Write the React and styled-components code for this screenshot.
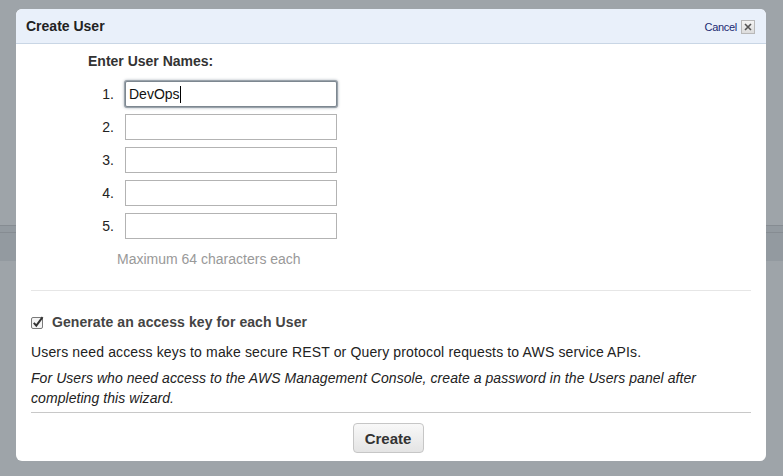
import styled, { createGlobalStyle } from "styled-components";

const GlobalStyle = createGlobalStyle`
    html, body {
        margin: 0;
        padding: 0;
        background: #9ea4a9;
        font-family: "Liberation Sans", Arial, sans-serif;
    }
`;

const Page = styled.div`
    position: relative;
    width: 783px;
    height: 476px;
    overflow: hidden;
    background: #9ea4a9;
    padding-top: 9px;
    box-sizing: border-box;
`;

// bands of the console behind the modal
const Backdrop = styled.div`
    position: absolute;
    left: 0;
    right: 0;
    top: 225px;
    height: 35px;
    border-top: 1px solid #868c92;
    background: #939aa0;
    &::after {
        content: "";
        position: absolute;
        left: 0;
        right: 0;
        top: 6px;
        border-top: 1px solid #868c92;
    }
`;

const Dialog = styled.div`
    position: relative;
    margin-left: 16px;
    width: 750px;
    height: 452px;
    background: #fff;
    border-radius: 6px;
    overflow: hidden;
    display: flex;
    flex-direction: column;
`;

const Header = styled.div`
    height: 34px;
    background: #e9f0fa;
    border-bottom: 1px solid #c9d6e5;
    display: flex;
    align-items: center;
    justify-content: space-between;
    padding: 0 11px 0 10px;
`;

const Title = styled.div`
    font-size: 14px;
    font-weight: bold;
    color: #222;
`;

const HeaderRight = styled.div`
    display: flex;
    align-items: center;
    gap: 4px;
    padding-top: 2px;
`;

const CancelLink = styled.span`
    font-size: 11px;
    letter-spacing: -0.3px;
    color: #1a2a72;
`;

const CloseBox = styled.div`
    width: 12px;
    height: 12px;
    border: 1px solid #b8b8b8;
    background: linear-gradient(#f4f4f4, #dcdcdc);
    display: flex;
    align-items: center;
    justify-content: center;
`;

const Body = styled.div`
    padding: 0 15px;
    display: flex;
    flex-direction: column;
`;

const NamesBlock = styled.div`
    padding: 9px 0 23px 57px;
    display: flex;
    flex-direction: column;
`;

const Label = styled.div`
    font-size: 14px;
    font-weight: bold;
    color: #333;
    margin-bottom: 12px;
`;

const NameRow = styled.div`
    display: flex;
    align-items: center;
    height: 26px;
    margin-bottom: 7px;
`;

const Num = styled.span`
    width: 26px;
    text-align: right;
    font-size: 14px;
    color: #222;
    margin-right: 11px;
`;

const NameInput = styled.div`
    width: 207px;
    height: 24px;
    border: 1px solid ${p => (p.focused ? "#7d8790" : "#b3b3b3")};
    box-shadow: ${p => (p.focused ? "0 0 0 1px #9aa3ab, 0 0 3px 1px #aeb6bd" : "none")};
    border-radius: ${p => (p.focused ? "2px" : "0")};
    background: #fff;
    font-size: 14px;
    color: #111;
    padding-left: 3px;
    display: flex;
    align-items: center;
    box-sizing: content-box;
`;

const Caret = styled.span`
    display: inline-block;
    width: 1px;
    height: 17px;
    background: #000;
`;

const Hint = styled.div`
    font-size: 14px;
    color: #999;
    margin: 5px 0 0 29px;
`;

const Rule = styled.div`
    height: 1px;
    background: ${p => p.color};
`;

const CheckRow = styled.div`
    display: flex;
    align-items: center;
    gap: 8px;
    margin-top: 23px;
`;

const CheckText = styled.span`
    font-size: 14px;
    font-weight: bold;
    letter-spacing: 0.08px;
    color: #444;
`;

const Para = styled.p`
    margin: ${p => p.m};
    font-size: 14px;
    line-height: 20px;
    letter-spacing: ${p => (p.italic ? "0.06px" : "0.15px")};
    color: #222;
    font-style: ${p => (p.italic ? "italic" : "normal")};
`;

const Footer = styled.div`
    display: flex;
    justify-content: center;
    padding: 10px 6px 0 0;
`;

const CreateButton = styled.button`
    width: 71px;
    height: 30px;
    border: 1px solid #c6c6c6;
    border-radius: 4px;
    background: linear-gradient(#f8f8f8, #e4e4e4);
    font-family: inherit;
    font-size: 15px;
    font-weight: bold;
    color: #333;
    padding: 0;
`;

function CheckIcon() {
    return (
        <svg width="13" height="13" viewBox="0 0 13 13">
            <rect x="0.5" y="1.5" width="11" height="11" rx="1.5" fill="#f4f4f4" stroke="#7a7a7a" />
            <path d="M2.8 6.8 L5.3 9.6 L11.6 1.2" fill="none" stroke="#333" strokeWidth="2" />
        </svg>
    );
}

function XIcon() {
    return (
        <svg width="8" height="8" viewBox="0 0 8 8">
            <path d="M1 1 L7 7 M7 1 L1 7" stroke="#555" strokeWidth="1.6" />
        </svg>
    );
}

export default function App() {
    const names = ["DevOps", "", "", "", ""];
    return (
        <Page>
            <GlobalStyle />
            <Backdrop />
            <Dialog>
                <Header>
                    <Title>Create User</Title>
                    <HeaderRight>
                        <CancelLink>Cancel</CancelLink>
                        <CloseBox><XIcon /></CloseBox>
                    </HeaderRight>
                </Header>
                <Body>
                    <NamesBlock>
                        <Label>Enter User Names:</Label>
                        {names.map((name, i) => (
                            <NameRow key={i}>
                                <Num>{i + 1}.</Num>
                                <NameInput focused={i === 0}>
                                    {name}
                                    {i === 0 && <Caret />}
                                </NameInput>
                            </NameRow>
                        ))}
                        <Hint>Maximum 64 characters each</Hint>
                    </NamesBlock>
                    <Rule color="#e6e6e6" />
                    <CheckRow>
                        <CheckIcon />
                        <CheckText>Generate an access key for each User</CheckText>
                    </CheckRow>
                    <Para m="12px 0 0 0">
                        Users need access keys to make secure REST or Query protocol requests to AWS service APIs.
                    </Para>
                    <Para m="6px 0 4px 0" italic>
                        For Users who need access to the AWS Management Console, create a password in the Users panel after completing this wizard.
                    </Para>
                    <Rule color="#c8c8c8" />
                    <Footer>
                        <CreateButton>Create</CreateButton>
                    </Footer>
                </Body>
            </Dialog>
        </Page>
    );
}
